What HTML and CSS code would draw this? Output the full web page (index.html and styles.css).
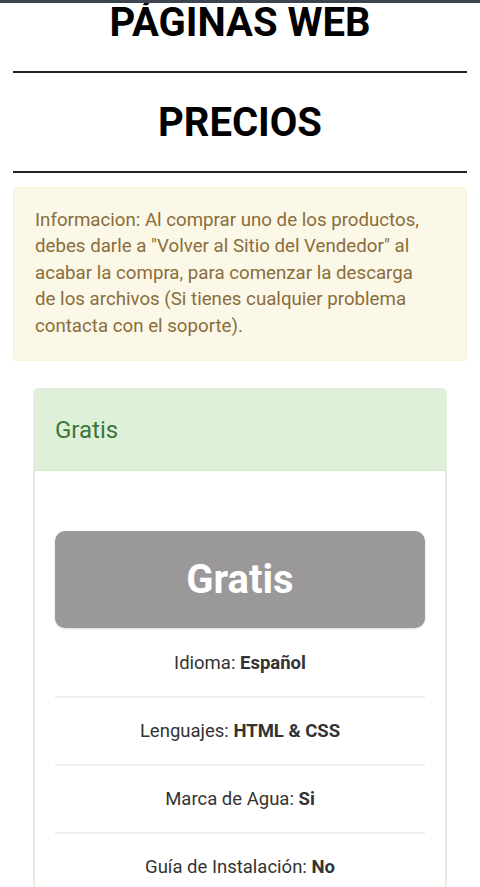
FILE: index.html
```html
<!DOCTYPE html>
<html lang="es">
<head>
<meta charset="utf-8">
<link rel="stylesheet" href="styles.css">
</head>
<body>
<div class="topbar"></div>
<main class="page">
  <h1 class="title title-top">PÁGINAS WEB</h1>
  <hr class="rule">
  <h1 class="title">PRECIOS</h1>
  <hr class="rule">
  <div class="alert">Informacion: Al comprar uno de los productos, debes darle a "Volver al Sitio del Vendedor" al acabar la compra, para comenzar la descarga de los archivos (Si tienes cualquier problema contacta con el soporte).</div>
  <section class="card">
    <div class="card-head">Gratis</div>
    <div class="card-body">
      <div class="price">Gratis</div>
      <ul class="features">
        <li>Idioma: <b>Español</b></li>
        <li>Lenguajes: <b>HTML &amp; CSS</b></li>
        <li>Marca de Agua: <b>Si</b></li>
        <li>Guía de Instalación: <b>No</b></li>
      </ul>
    </div>
  </section>
</main>
</body>
</html>
```
FILE: styles.css
```css
html, body { margin: 0; padding: 0; background: #fff; }
body { font-family: Roboto, "Noto Sans", sans-serif; color: #333; }
.topbar { position: relative; z-index: 1; height: 3px; background: #3c4550; }
.page { padding: 0 13px; }
.title {
  margin: 0;
  text-align: center;
  font-weight: 700;
  font-size: 40px;
  line-height: 46px;
  color: #000;
  padding: 27px 0 25px;
}
.title-top { margin-top: -3px; padding-top: 0; padding-bottom: 25px; }
.rule { margin: 0; border: 0; border-top: 2px solid #222; }
.alert {
  margin-top: 14px;
  background: #fcf8e8;
  border: 1px solid #f9f0d8;
  border-radius: 4px;
  color: #8a6d3b;
  font-size: 18.7px;
  line-height: 26.45px;
  padding: 19px 36px 21px 21px;
}
.card {
  margin: 27px 20px 0;
  border: 2px solid #e8eade;
  border-radius: 5px;
  overflow: hidden;
}
.card-head {
  background: #dff0d8;
  color: #3c763d;
  font-size: 24px;
  height: 80px;
  line-height: 80px;
  padding: 0 20px;
  border-bottom: 1px solid #d6e9c6;
}
.card-body { padding: 60px 20px 0; }
.price {
  background: #9a9898;
  color: #fff;
  font-weight: 700;
  font-size: 40px;
  text-align: center;
  height: 97px;
  line-height: 97px;
  border-radius: 10px;
  box-shadow: 0 1px 2px rgba(0,0,0,0.15);
  margin-bottom: 2px;
}
.features { list-style: none; margin: 0; padding: 0; }
.features li {
  text-align: center;
  font-size: 18.5px;
  line-height: 66px;
  border-bottom: 2px solid #eeeeee;
  color: #333;
}
.features b { color: #333; }
```
